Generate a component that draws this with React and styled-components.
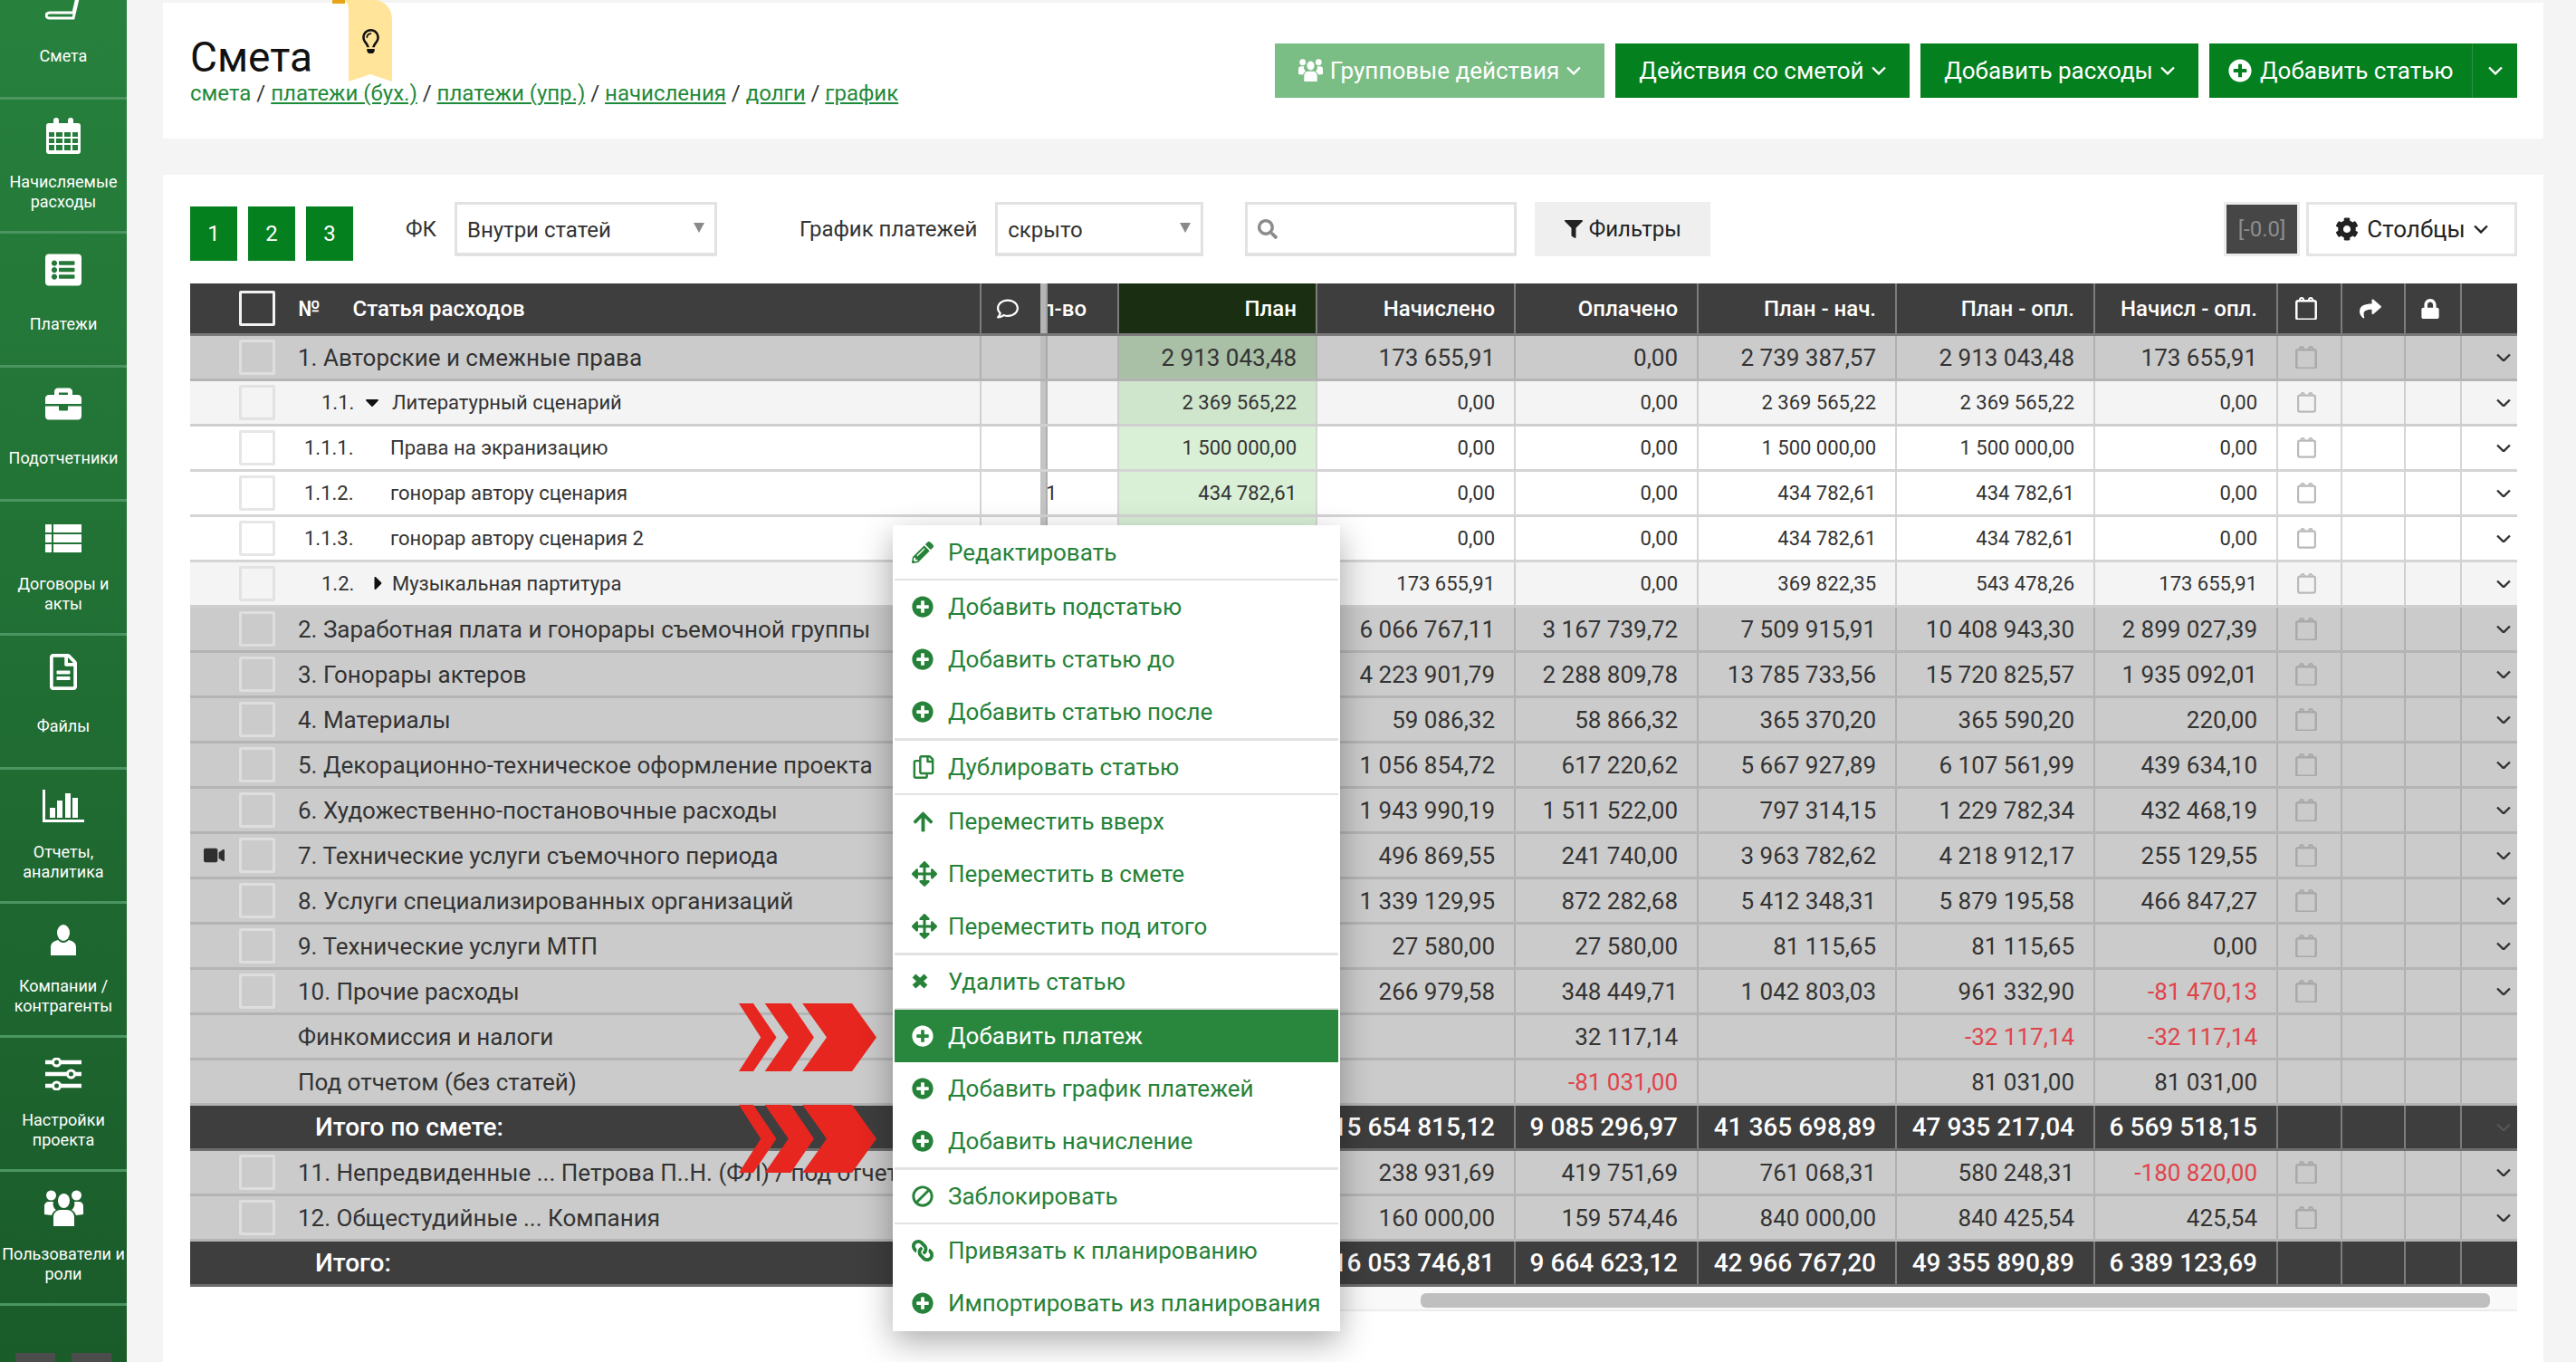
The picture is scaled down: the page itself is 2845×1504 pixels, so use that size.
import React from 'react';
import styled, { createGlobalStyle } from 'styled-components';
import {
  FaArrowUp,
  FaArrowsAlt,
  FaBan,
  FaBriefcase,
  FaCaretDown,
  FaCaretRight,
  FaCog,
  FaFilter,
  FaLink,
  FaListAlt,
  FaLock,
  FaPencilAlt,
  FaPlusCircle,
  FaRegComment,
  FaRegCopy,
  FaRegFileAlt,
  FaRegLightbulb,
  FaSearch,
  FaShare,
  FaVideo,
} from 'react-icons/fa';

const GlobalStyle = createGlobalStyle`
  html, body {
    margin: 0;
    height: 100%;
    overflow: hidden;
    background: #f4f4f4;
    font-family: Roboto, "Liberation Sans", sans-serif;
    color: #333;
  }
  * { box-sizing: border-box; }
`;

const GREEN = '#04801f';
const COLUMNS = '872px 67px 8px 77px 219px 219px 202px 219px 219px 202px 71px 70px 62px 63px';

const Shell = styled.div`
  display: flex;
  width: 2845px;
  height: 1504px;
  overflow: hidden;
`;

/* sidebar */

const Sidebar = styled.aside`
  width: 140px;
  flex: none;
  overflow: hidden;
  background: linear-gradient(180deg, #27813d 0%, #1a5b2a 100%);
`;

const NavList = styled.nav`
  margin-top: -38px;
`;

const NavItem = styled.a`
  display: block;
  height: 148px;
  border-bottom: 3px solid #4a9560;
  color: #fff;
  text-align: center;
`;

const NavIcon = styled.div`
  height: 80px;
  display: flex;
  align-items: center;
  justify-content: center;
  font-size: 40px;
`;

const NavLabel = styled.div`
  height: 44px;
  margin-top: ${(p) => (p.$single ? -2 : 0)}px;
  display: flex;
  align-items: center;
  justify-content: center;
  font-size: 18px;
  line-height: 22px;
`;

const NavFoot = styled.div`
  display: flex;
  gap: 18px;
  margin-top: 52px;
  padding-left: 17px;
`;

const FootSquare = styled.div`
  width: 44px;
  height: 40px;
  background: #4c4c4c;
`;

/* page */

const Main = styled.main`
  flex: 1;
  padding: 3px 36px 0 40px;
  display: flex;
  flex-direction: column;
  gap: 40px;
`;

const HeadCard = styled.header`
  position: relative;
  height: 150px;
  background: #fff;
  padding: 32px 29px 0 30px;
  display: flex;
  justify-content: space-between;
`;

const Ribbon = styled.svg`
  position: absolute;
  left: 201px;
  top: -3px;
  width: 52px;
  height: 90px;
`;

const RibbonTip = styled.div`
  position: absolute;
  left: 187px;
  top: -3px;
  width: 14px;
  height: 4px;
  background: #e6a417;
`;

const Bulb = styled(FaRegLightbulb)`
  position: absolute;
  left: 216px;
  top: 29px;
  font-size: 27px;
  color: #111;
`;

const Title = styled.h1`
  margin: 0;
  font-size: 46px;
  line-height: 56px;
  font-weight: 400;
  color: #111;
`;

const Crumbs = styled.div`
  margin-top: -3px;
  font-size: 24px;
  line-height: 30px;
  color: #333;
`;

const Crumb = styled.a`
  color: #1f8a3a;
  text-decoration: ${(p) => (p.$link ? 'underline' : 'none')};
`;

const Actions = styled.div`
  display: flex;
  gap: 12px;
  margin-top: 13px;
`;

const ActionButton = styled.button`
  width: ${(p) => p.$width}px;
  height: 60px;
  padding: 0;
  display: flex;
  align-items: center;
  justify-content: center;
  gap: 8px;
  border: 0;
  background: ${(p) => (p.$muted ? '#7abd85' : GREEN)};
  color: #fff;
  font: 400 26px Roboto, sans-serif;
`;

const SplitMain = styled(ActionButton)`
  justify-content: flex-start;
  padding-left: 21px;
  gap: 9px;
`;

const SplitEdge = styled(ActionButton)`
  margin-left: -12px;
  border-left: 1px solid #2b8f42;
`;

const Card = styled.section`
  position: relative;
  flex: 1;
  background: #fff;
  padding: 30px 29px 0 30px;
`;

/* toolbar */

const Toolbar = styled.div`
  display: flex;
  align-items: flex-start;
  height: 60px;
`;

const Levels = styled.div`
  display: flex;
  gap: 12px;
  margin-top: 5px;
`;

const LevelButton = styled.button`
  width: 52px;
  height: 60px;
  border: 0;
  background: ${GREEN};
  color: #fff;
  font: 400 24px Roboto, sans-serif;
`;

const FieldLabel = styled.label`
  height: 60px;
  display: flex;
  align-items: center;
  margin-left: ${(p) => p.$left}px;
  margin-right: ${(p) => p.$right}px;
  font-size: 24px;
  color: #333;
`;

const Select = styled.div`
  position: relative;
  width: ${(p) => p.$width}px;
  height: 60px;
  border: 3px solid #e2e2e2;
  border-bottom-width: 4px;
  padding: 2px 0 0 ${(p) => p.$pad}px;
  display: flex;
  align-items: center;
  font-size: 24px;
  color: #333;
  &::after {
    content: '';
    position: absolute;
    right: 11px;
    top: 20px;
    border-left: 6px solid transparent;
    border-right: 6px solid transparent;
    border-top: 11px solid #8a8a8a;
  }
`;

const SearchBox = styled.div`
  width: 300px;
  height: 60px;
  margin-left: 46px;
  border: 3px solid #e2e2e2;
  border-bottom-width: 4px;
  padding-left: 11px;
  display: flex;
  align-items: center;
  color: #8c8c8c;
  font-size: 22px;
`;

const FilterButton = styled.button`
  width: 194px;
  height: 60px;
  margin-left: 20px;
  border: 0;
  background: #efefef;
  color: #222;
  display: flex;
  align-items: center;
  justify-content: center;
  gap: 7px;
  font: 400 24px Roboto, sans-serif;
  svg { font-size: 20px; }
`;

const Version = styled.div`
  margin-left: auto;
  width: 84px;
  height: 60px;
  border: 3px solid #ececec;
  background: #464646;
  color: #8d8d8d;
  display: flex;
  align-items: center;
  justify-content: center;
  font-size: 24px;
`;

const ColumnsButton = styled.button`
  width: 233px;
  height: 60px;
  margin-left: 7px;
  border: 3px solid #e4e4e4;
  background: #fff;
  color: #222;
  display: flex;
  align-items: center;
  justify-content: center;
  gap: 9px;
  font: 400 26px Roboto, sans-serif;
`;

/* table */

const Table = styled.div`
  margin-top: 30px;
`;

const kinds = {
  head: { bg: '#3e3e3e', line: '#7c7c7c', edge: '#7b7b7b', plan: '#1a2f12', color: '#fff', size: 24, weight: 500, check: '#f2f2f2', bar: '#b4b4b4' },
  group: { bg: '#cbcbcb', line: '#b0b0b0', edge: '#b4b4b4', plan: '#a9bfa6', color: '#333', size: 26, weight: 400, check: '#dedede', bar: '#bdbdbd' },
  sub: { bg: '#f4f4f4', line: '#d0d0d0', edge: '#cfcfcf', plan: '#cfe5cc', color: '#333', size: 22, weight: 400, check: '#e2e2e2', bar: '#c4c4c4' },
  item: { bg: '#fff', line: '#d6d6d6', edge: '#d4d4d4', plan: '#d9efd6', color: '#333', size: 22, weight: 400, check: '#e6e6e6', bar: '#c4c4c4' },
  total: { bg: '#3e3e3e', line: '#7c7c7c', edge: '#6e6e6e', plan: '#3e3e3e', color: '#fff', size: 28, weight: 500, check: 'transparent', bar: '#3e3e3e' },
};

const Row = styled.div`
  --line: ${(p) => kinds[p.$kind].line};
  --check: ${(p) => kinds[p.$kind].check};
  --plan: ${(p) => kinds[p.$kind].plan};
  --bar: ${(p) => kinds[p.$kind].bar};
  display: grid;
  grid-template-columns: ${COLUMNS};
  height: ${(p) => (p.$kind === 'head' ? 58 : 50)}px;
  background: ${(p) => kinds[p.$kind].bg};
  border-bottom: 3px solid ${(p) => kinds[p.$kind].edge};
  color: ${(p) => kinds[p.$kind].color};
  font-size: ${(p) => kinds[p.$kind].size}px;
  font-weight: ${(p) => kinds[p.$kind].weight};
`;

const NameCell = styled.div`
  display: flex;
  align-items: center;
  overflow: hidden;
  white-space: nowrap;
  padding-left: 15px;
`;

const Mark = styled.span`
  width: 24px;
  flex: none;
  display: flex;
  color: #2f2f2f;
  font-size: 23px;
`;

const Check = styled.span`
  width: 40px;
  height: 39px;
  flex: none;
  margin: 0 25px 0 15px;
  border: 3px solid ${(p) => (p.$hidden ? 'transparent' : 'var(--check)')};
  border-radius: 2px;
`;

const Numbering = styled.span`
  flex: none;
  width: ${(p) => p.$width}px;
  margin-left: ${(p) => p.$left}px;
`;

const CaretSlot = styled.span`
  flex: none;
  width: 34px;
  display: flex;
  padding-left: ${(p) => p.$left}px;
  padding-bottom: 2px;
  color: #111;
  font-size: 24px;
`;

const TotalName = styled.span`
  margin-left: 19px;
`;

const ColTitle = styled.span`
  margin-left: ${(p) => p.$left || 0}px;
`;

const Cell = styled.div`
  border-left: 2px solid var(--line);
  display: flex;
  align-items: center;
  justify-content: flex-end;
  overflow: hidden;
  white-space: nowrap;
  padding-right: ${(p) => p.$pad ?? 21}px;
  background: ${(p) => (p.$plan ? 'var(--plan)' : 'transparent')};
  color: ${(p) => (p.$red ? '#e0434a' : 'inherit')};
`;

const Bar = styled.div`
  background: var(--bar);
  border-right: 2px solid rgba(0, 0, 0, 0.1);
`;

const QtyCell = styled.div`
  display: flex;
  align-items: center;
  justify-content: ${(p) => (p.$head ? 'flex-end' : 'flex-start')};
  overflow: hidden;
  white-space: nowrap;
  padding-right: ${(p) => (p.$head ? 34 : 0)}px;
  text-indent: ${(p) => (p.$head ? 0 : -2)}px;
`;

const IconCell = styled(Cell)`
  justify-content: center;
  padding: 0 7px 0 0;
  color: ${(p) => p.$tone || '#fff'};
  font-size: ${(p) => p.$size || 24}px;
`;

const ChevronCell = styled(Cell)`
  padding-right: 7px;
  color: ${(p) => p.$tone || '#333'};
`;

const ScrollTrack = styled.div`
  height: 27px;
  margin-left: 947px;
  padding: 7px 0 0 412px;
  background: #f9f9f9;
  border-bottom: 2px solid #ececec;
`;

const ScrollThumb = styled.div`
  width: 1181px;
  height: 16px;
  border-radius: 6px;
  background: #bfbfbf;
`;

/* context menu */

const Menu = styled.ul`
  position: absolute;
  left: 806px;
  top: 387px;
  width: 494px;
  height: 890px;
  margin: 0;
  padding: 0.5px 2px 0;
  list-style: none;
  background: #fff;
  box-shadow: 0 12px 34px rgba(0, 0, 0, 0.32);
`;

const MenuItem = styled.li`
  height: 58px;
  display: flex;
  align-items: center;
  padding-left: 19px;
  font-size: 26px;
  color: ${(p) => (p.$active ? '#fff' : '#268239')};
  background: ${(p) => (p.$active ? '#28873c' : 'transparent')};
`;

const MenuIcon = styled.span`
  width: 40px;
  flex: none;
  display: flex;
  font-size: ${(p) => p.$size || 24}px;
  transform: ${(p) => (p.$flip ? 'scaleX(-1)' : 'none')};
  transform-origin: 12px 50%;
`;

const MenuSep = styled.li`
  height: 2.5px;
  background: #e2e2e2;
`;

const Arrows = styled.svg`
  position: absolute;
  left: 636px;
  top: ${(p) => p.$top}px;
  width: 152px;
  height: 75px;
  fill: #e6261f;
`;

/* drawn icons */

const Chevron = ({ size = 16 }) => (
  <svg width={size} height={size * 0.62} viewBox="0 0 16 10" fill="none" stroke="currentColor" strokeWidth="2.4">
    <path d="M1 1.500 8 8.500 15 1.500" />
  </svg>
);

const CalendarOutline = () => (
  <svg width="1em" height="1.08em" viewBox="0 0 24 26" fill="none" stroke="currentColor">
    <rect x="1.250" y="4.250" width="21.500" height="20.500" rx="2" strokeWidth="2.500" />
    <path strokeWidth="2" d="M5 4V3a2 2 0 0 1 4 0v1M15 4V3a2 2 0 0 1 4 0v1" />
  </svg>
);

const TimesIcon = () => (
  <svg width="18" height="17" viewBox="0 0 18 17" fill="none" stroke="currentColor" strokeWidth="5.500">
    <path d="M2.500 2.500 15.500 14.500M15.500 2.500 2.500 14.500" />
  </svg>
);

const GroupIcon = ({ size }) => (
  <svg width={size} height={size * 0.93} viewBox="0 0 43 40" fill="currentColor">
    <circle cx="7.500" cy="6" r="5.500" />
    <circle cx="35.500" cy="6" r="5.500" />
    <ellipse cx="21.500" cy="12" rx="6.500" ry="8" />
    <path d="M0 27V18c0-3 2-5 5-5h5c-1 3 0 7 3 9-2 1-4 3-5 6ZM43 27V18c0-3-2-5-5-5h-5c1 3 0 7-3 9 2 1 4 3 5 6ZM10 40V30c0-5 4-8 8-8h7c4 0 8 3 8 8v10Z" />
  </svg>
);

const BookIcon = () => (
  <svg width="40" height="40" viewBox="0 0 40 40" fill="none" stroke="#fff" strokeWidth="3">
    <path d="M12 2h26l-7 30H5c-3 0-4 2-4 3s1 3 4 3h26l7-30" />
  </svg>
);

const CalendarGrid = () => (
  <svg width="38" height="40" viewBox="0 0 38 40" fill="#fff">
    <path fillRule="evenodd" d="M3 6h5V3a3 3 0 0 1 6 0v3h10V3a3 3 0 0 1 6 0v3h5a3 3 0 0 1 3 3v28a3 3 0 0 1-3 3H3a3 3 0 0 1-3-3V9a3 3 0 0 1 3-3Zm0 10v5h6v-5Zm8 0v5h7v-5Zm9 0v5h7v-5Zm9 0v5h6v-5ZM3 23v5h6v-5Zm8 0v5h7v-5Zm9 0v5h7v-5Zm9 0v5h6v-5ZM3 30v6h6v-6Zm8 0v6h7v-6Zm9 0v6h7v-6Zm9 0v6h6v-6Z" />
  </svg>
);

const RowsIcon = () => (
  <svg width="40" height="31" viewBox="0 0 40 31" fill="#fff">
    <path d="M0 0h7v9H0ZM9 0h31v9H9ZM0 11h7v9H0ZM9 11h31v9H9ZM0 22h7v9H0ZM9 22h31v9H9Z" />
  </svg>
);

const ChartIcon = () => (
  <svg width="46" height="36" viewBox="0 0 46 36" fill="#fff">
    <path d="M0 0h3v33h43v3H0Z" />
    <path d="M8 20h6v11H8ZM16 12h6v19h-6ZM25 4h6v27h-6ZM33 9h6v22h-6Z" />
  </svg>
);

const UserIcon = () => (
  <svg width="28" height="34" viewBox="0 0 28 34" fill="#fff">
    <ellipse cx="14" cy="9" rx="7" ry="9" />
    <path d="M0 34V25c0-5 4-7 8-8 2 2 4 3 6 3s4-1 6-3c4 1 8 3 8 8v9Z" />
  </svg>
);

const SlidersIcon = () => (
  <svg width="40" height="36" viewBox="0 0 40 36" fill="none" stroke="#fff">
    <path strokeWidth="4.500" d="M0 5h8M17 5h23M0 18h24M33 18h7M0 31h8M17 31h23" />
    <circle cx="12.500" cy="5" r="4" strokeWidth="3" />
    <circle cx="28.500" cy="18" r="4" strokeWidth="3" />
    <circle cx="12.500" cy="31" r="4" strokeWidth="3" />
  </svg>
);

const navItems = [
  { icon: <BookIcon />, label: 'Смета', single: true },
  { icon: <CalendarGrid />, label: 'Начисляемые расходы' },
  { icon: <FaListAlt />, label: 'Платежи', single: true },
  { icon: <FaBriefcase />, label: 'Подотчетники', single: true },
  { icon: <RowsIcon />, label: 'Договоры и акты' },
  { icon: <FaRegFileAlt />, label: 'Файлы', single: true },
  { icon: <ChartIcon />, label: 'Отчеты, аналитика' },
  { icon: <UserIcon />, label: 'Компании / контрагенты' },
  { icon: <SlidersIcon />, label: 'Настройки проекта' },
  { icon: <GroupIcon size={43} />, label: 'Пользователи и роли' },
];

const menuItems = [
  { icon: FaPencilAlt, label: 'Редактировать' },
  'sep',
  { icon: FaPlusCircle, label: 'Добавить подстатью' },
  { icon: FaPlusCircle, label: 'Добавить статью до' },
  { icon: FaPlusCircle, label: 'Добавить статью после' },
  'sep',
  { icon: FaRegCopy, size: 26, label: 'Дублировать статью' },
  'sep',
  { icon: FaArrowUp, size: 25, label: 'Переместить вверх' },
  { icon: FaArrowsAlt, size: 28, label: 'Переместить в смете' },
  { icon: FaArrowsAlt, size: 28, label: 'Переместить под итого' },
  'sep',
  { icon: TimesIcon, label: 'Удалить статью' },
  'sep',
  { icon: FaPlusCircle, label: 'Добавить платеж', active: true },
  { icon: FaPlusCircle, label: 'Добавить график платежей' },
  { icon: FaPlusCircle, label: 'Добавить начисление' },
  'sep',
  { icon: FaBan, flip: true, label: 'Заблокировать' },
  'sep',
  { icon: FaLink, flip: true, label: 'Привязать к планированию' },
  { icon: FaPlusCircle, label: 'Импортировать из планирования' },
];

// plan, начислено, оплачено, план-нач, план-опл, начисл-опл
const rows = [
  { kind: 'group', name: '1. Авторские и смежные права', values: ['2 913 043,48', '173 655,91', '0,00', '2 739 387,57', '2 913 043,48', '173 655,91'] },
  { kind: 'sub', no: '1.1.', caret: 'down', name: 'Литературный сценарий', values: ['2 369 565,22', '0,00', '0,00', '2 369 565,22', '2 369 565,22', '0,00'] },
  { kind: 'item', no: '1.1.1.', name: 'Права на экранизацию', values: ['1 500 000,00', '0,00', '0,00', '1 500 000,00', '1 500 000,00', '0,00'] },
  { kind: 'item', no: '1.1.2.', name: 'гонорар автору сценария', qty: '1', values: ['434 782,61', '0,00', '0,00', '434 782,61', '434 782,61', '0,00'] },
  { kind: 'item', no: '1.1.3.', name: 'гонорар автору сценария 2', values: ['434 782,61', '0,00', '0,00', '434 782,61', '434 782,61', '0,00'] },
  { kind: 'sub', no: '1.2.', caret: 'right', name: 'Музыкальная партитура', values: ['', '173 655,91', '0,00', '369 822,35', '543 478,26', '173 655,91'] },
  { kind: 'group', name: '2. Заработная плата и гонорары съемочной группы', values: ['', '6 066 767,11', '3 167 739,72', '7 509 915,91', '10 408 943,30', '2 899 027,39'] },
  { kind: 'group', name: '3. Гонорары актеров', values: ['', '4 223 901,79', '2 288 809,78', '13 785 733,56', '15 720 825,57', '1 935 092,01'] },
  { kind: 'group', name: '4. Материалы', values: ['', '59 086,32', '58 866,32', '365 370,20', '365 590,20', '220,00'] },
  { kind: 'group', name: '5. Декорационно-техническое оформление проекта', values: ['', '1 056 854,72', '617 220,62', '5 667 927,89', '6 107 561,99', '439 634,10'] },
  { kind: 'group', name: '6. Художественно-постановочные расходы', values: ['', '1 943 990,19', '1 511 522,00', '797 314,15', '1 229 782,34', '432 468,19'] },
  { kind: 'group', video: true, name: '7. Технические услуги съемочного периода', values: ['', '496 869,55', '241 740,00', '3 963 782,62', '4 218 912,17', '255 129,55'] },
  { kind: 'group', name: '8. Услуги специализированных организаций', values: ['', '1 339 129,95', '872 282,68', '5 412 348,31', '5 879 195,58', '466 847,27'] },
  { kind: 'group', name: '9. Технические услуги МТП', values: ['', '27 580,00', '27 580,00', '81 115,65', '81 115,65', '0,00'] },
  { kind: 'group', name: '10. Прочие расходы', values: ['', '266 979,58', '348 449,71', '1 042 803,03', '961 332,90', '-81 470,13'] },
  { kind: 'group', plain: true, name: 'Финкомиссия и налоги', values: ['', '', '32 117,14', '', '-32 117,14', '-32 117,14'] },
  { kind: 'group', plain: true, name: 'Под отчетом (без статей)', values: ['', '', '-81 031,00', '', '81 031,00', '81 031,00'] },
  { kind: 'total', chevron: true, name: 'Итого по смете:', values: ['', '15 654 815,12', '9 085 296,97', '41 365 698,89', '47 935 217,04', '6 569 518,15'] },
  { kind: 'group', name: '11. Непредвиденные ... Петрова П..Н. (ФЛ) / под отчетом', values: ['', '238 931,69', '419 751,69', '761 068,31', '580 248,31', '-180 820,00'] },
  { kind: 'group', name: '12. Общестудийные ... Компания', values: ['', '160 000,00', '159 574,46', '840 000,00', '840 425,54', '425,54'] },
  { kind: 'total', name: 'Итого:', values: ['', '16 053 746,81', '9 664 623,12', '42 966 767,20', '49 355 890,89', '6 389 123,69'] },
];

const headTitles = ['План', 'Начислено', 'Оплачено', 'План - нач.', 'План - опл.', 'Начисл - опл.'];

function RowName({ row }) {
  if (row.kind === 'total') {
    return <NameCell><Mark /><Check $hidden /><TotalName>{row.name}</TotalName></NameCell>;
  }
  return (
    <NameCell>
      <Mark>{row.video && <FaVideo />}</Mark>
      <Check $hidden={row.plain} />
      {row.kind === 'sub' && (
        <>
          <Numbering $left={26} $width={44}>{row.no}</Numbering>
          <CaretSlot $left={row.caret === 'down' ? 0 : 7}>
            {row.caret === 'down' ? <FaCaretDown /> : <FaCaretRight />}
          </CaretSlot>
        </>
      )}
      {row.kind === 'item' && <Numbering $left={7} $width={95}>{row.no}</Numbering>}
      {row.name}
    </NameCell>
  );
}

function DataRow({ row }) {
  const group = row.kind === 'group';
  const hasTools = row.kind !== 'total' && !row.plain;
  return (
    <Row $kind={row.kind}>
      <RowName row={row} />
      <Cell />
      <Bar />
      <QtyCell>{row.qty}</QtyCell>
      {row.values.map((value, i) => (
        <Cell key={i} $plan={i === 0} $red={value.startsWith('-')}>{value}</Cell>
      ))}
      <IconCell $tone={group ? '#a9a9a9' : '#b9b9b9'} $size={group ? 24 : 21}>
        {hasTools && <CalendarOutline />}
      </IconCell>
      <Cell />
      <Cell />
      <ChevronCell $tone={row.chevron ? '#555' : '#333'}>
        {(hasTools || row.chevron) && <Chevron />}
      </ChevronCell>
    </Row>
  );
}

export default function App() {
  return (
    <Shell>
      <GlobalStyle />
      <Sidebar>
        <NavList>
          {navItems.map((item) => (
            <NavItem key={item.label}>
              <NavIcon>{item.icon}</NavIcon>
              <NavLabel $single={item.single}>{item.label}</NavLabel>
            </NavItem>
          ))}
        </NavList>
        <NavFoot>
          <FootSquare />
          <FootSquare />
        </NavFoot>
      </Sidebar>

      <Main>
        <HeadCard>
          <RibbonTip />
          <Ribbon viewBox="0 0 52 90">
            <path fill="#ffe499" d="M4 90V12C4 6 2 2 0 0H32C44 0 52 10 52 22V90L28 82Z" />
          </Ribbon>
          <Bulb />
          <div>
            <Title>Смета</Title>
            <Crumbs>
              <Crumb>смета</Crumb> / <Crumb $link>платежи (бух.)</Crumb> / <Crumb $link>платежи (упр.)</Crumb> /{' '}
              <Crumb $link>начисления</Crumb> / <Crumb $link>долги</Crumb> / <Crumb $link>график</Crumb>
            </Crumbs>
          </div>
          <Actions>
            <ActionButton $muted $width={364}><GroupIcon size={27} /> Групповые действия <Chevron /></ActionButton>
            <ActionButton $width={325}>Действия со сметой <Chevron /></ActionButton>
            <ActionButton $width={307}>Добавить расходы <Chevron /></ActionButton>
            <SplitMain $width={290}><FaPlusCircle /> Добавить статью</SplitMain>
            <SplitEdge $width={50}><Chevron /></SplitEdge>
          </Actions>
        </HeadCard>

        <Card>
          <Toolbar>
            <Levels>
              <LevelButton>1</LevelButton>
              <LevelButton>2</LevelButton>
              <LevelButton>3</LevelButton>
            </Levels>
            <FieldLabel $left={58} $right={20}>ФК</FieldLabel>
            <Select $width={290} $pad={11}>Внутри статей</Select>
            <FieldLabel $left={91} $right={20}>График платежей</FieldLabel>
            <Select $width={230} $pad={11}>скрыто</Select>
            <SearchBox><FaSearch /></SearchBox>
            <FilterButton><FaFilter /> Фильтры</FilterButton>
            <Version>[-0.0]</Version>
            <ColumnsButton><FaCog /> Столбцы <Chevron /></ColumnsButton>
          </Toolbar>

          <Table>
            <Row $kind="head">
              <NameCell>
                <Mark />
                <Check />
                №
                <ColTitle $left={36}>Статья расходов</ColTitle>
              </NameCell>
              <IconCell><FaRegComment /></IconCell>
              <Bar />
              <QtyCell $head>Кол-во</QtyCell>
              {headTitles.map((title, i) => (
                <Cell key={title} $plan={i === 0}>{title}</Cell>
              ))}
              <IconCell><CalendarOutline /></IconCell>
              <IconCell><FaShare /></IconCell>
              <IconCell $size={22}><FaLock /></IconCell>
              <Cell />
            </Row>
            {rows.map((row) => (
              <DataRow key={row.name} row={row} />
            ))}
            <ScrollTrack>
              <ScrollThumb />
            </ScrollTrack>
          </Table>

          <Arrows $top={915} viewBox="0 0 152 75">
            <path d="M0 0h16l25.500 37.500L16 75H0l24.200-37.500Z M28.700 0h28.700L83 37.500 57.400 75H28.700l26.100-37.500Z M70.200 0H125l27 37.500L125 75H70.200L97 37.500Z" />
          </Arrows>
          <Arrows $top={1027} viewBox="0 0 152 75">
            <path d="M0 0h16l25.500 37.500L16 75H0l24.200-37.500Z M28.700 0h28.700L83 37.500 57.400 75H28.700l26.100-37.500Z M70.200 0H125l27 37.500L125 75H70.200L97 37.500Z" />
          </Arrows>

          <Menu>
            {menuItems.map((item, i) =>
              item === 'sep' ? (
                <MenuSep key={i} />
              ) : (
                <MenuItem key={item.label} $active={item.active}>
                  <MenuIcon $size={item.size} $flip={item.flip}><item.icon /></MenuIcon>
                  {item.label}
                </MenuItem>
              )
            )}
          </Menu>
        </Card>
      </Main>
    </Shell>
  );
}
